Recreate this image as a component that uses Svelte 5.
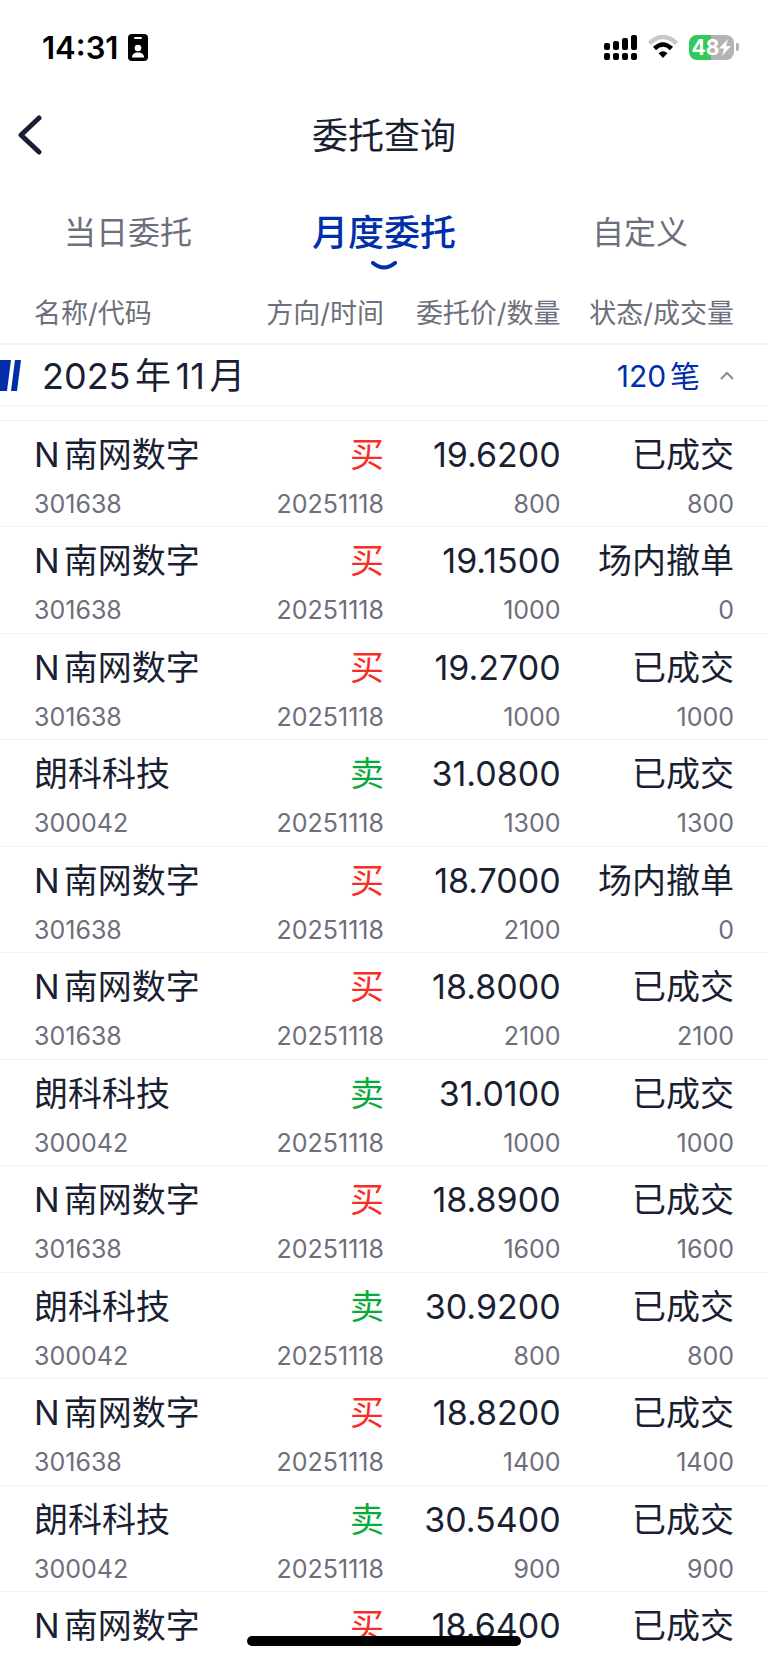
<script lang="ts">
	interface Order {
		name: string;
		side: '买' | '卖';
		price: string;
		status: string;
		code?: string;
		date?: string;
		qty?: string;
		filled?: string;
	}

	const tabs = ['当日委托', '月度委托', '自定义'];
	const columns = ['名称/代码', '方向/时间', '委托价/数量', '状态/成交量'];

	const date = '20251118';
	const nw = { name: 'N南网数字', code: '301638', date };
	const lk = { name: '朗科科技', code: '300042', date };

	const orders: Order[] = [
		{ ...nw, side: '买', price: '19.6200', qty: '800', status: '已成交', filled: '800' },
		{ ...nw, side: '买', price: '19.1500', qty: '1000', status: '场内撤单', filled: '0' },
		{ ...nw, side: '买', price: '19.2700', qty: '1000', status: '已成交', filled: '1000' },
		{ ...lk, side: '卖', price: '31.0800', qty: '1300', status: '已成交', filled: '1300' },
		{ ...nw, side: '买', price: '18.7000', qty: '2100', status: '场内撤单', filled: '0' },
		{ ...nw, side: '买', price: '18.8000', qty: '2100', status: '已成交', filled: '2100' },
		{ ...lk, side: '卖', price: '31.0100', qty: '1000', status: '已成交', filled: '1000' },
		{ ...nw, side: '买', price: '18.8900', qty: '1600', status: '已成交', filled: '1600' },
		{ ...lk, side: '卖', price: '30.9200', qty: '800', status: '已成交', filled: '800' },
		{ ...nw, side: '买', price: '18.8200', qty: '1400', status: '已成交', filled: '1400' },
		{ ...lk, side: '卖', price: '30.5400', qty: '900', status: '已成交', filled: '900' },
		{ name: 'N南网数字', side: '买', price: '18.6400', status: '已成交' }
	];

	let active = $state('月度委托');
	let open = $state(true);
</script>

<div class="screen">
	<div class="status-bar">
		<div class="clock">
			<span>14:31</span>
			<svg width="20" height="27" viewBox="0 0 20 27" aria-hidden="true">
				<rect width="20" height="27" rx="4" />
				<rect x="6" y="3" width="8" height="2" rx="1" fill="#fff" />
				<circle cx="10" cy="14" r="3.300" fill="#fff" />
				<path d="M4 23.500c0-3.500 2.500-5 6-5s6 1.500 6 5z" fill="#fff" />
			</svg>
		</div>
		<div class="indicators">
			<svg width="33" height="25" viewBox="0 0 33 25" aria-hidden="true">
				<rect x="0" y="8" width="6" height="7" rx="2" />
				<rect x="9" y="6" width="6" height="9" rx="2" />
				<rect x="18" y="3" width="6" height="12" rx="2" />
				<rect x="27" y="0" width="6" height="15" rx="2" />
				<rect x="0" y="18" width="6" height="7" rx="2" />
				<rect x="9" y="18" width="6" height="7" rx="2" />
				<rect x="18" y="18" width="6" height="7" rx="2" />
				<rect x="27" y="18" width="6" height="7" rx="2" />
			</svg>
			<svg width="32" height="24" viewBox="0 0 32 24" aria-hidden="true">
				<path d="M2.500 8.500Q16-4.500 29.500 8.500" fill="none" stroke="#c8c8c8" stroke-width="4.500" />
				<path d="M7.500 13.500Q16 5.500 24.500 13.500" fill="none" stroke="#000" stroke-width="4.500" />
				<path d="M11.500 18.200Q16 14.500 20.500 18.200L16 23z" />
			</svg>
			<div class="battery">
				<div class="cell">
					<span>48</span>
					<svg width="12" height="17" viewBox="0 0 12 17" aria-hidden="true">
						<path d="M9 0L0 9.500h5L3 17l9-10H7z" fill="#fff" />
					</svg>
				</div>
				<svg width="3" height="8" viewBox="0 0 3 8" aria-hidden="true">
					<path d="M0 0a4 4 0 0 1 0 8z" fill="#b3b3b3" />
				</svg>
			</div>
		</div>
	</div>

	<header class="title-bar">
		<button type="button" class="back" aria-label="返回">
			<svg width="24" height="40" viewBox="0 0 24 40" aria-hidden="true">
				<path
					d="M21 3L3 20L21 37"
					fill="none"
					stroke="#1b1f33"
					stroke-width="5"
					stroke-linecap="round"
					stroke-linejoin="round"
				/>
			</svg>
		</button>
		<h1>委托查询</h1>
	</header>

	<nav class="tabs">
		{#each tabs as tab (tab)}
			<button type="button" class:active={tab === active} onclick={() => (active = tab)}>
				<span>{tab}</span>
				{#if tab === active}
					<svg width="26" height="9" viewBox="0 0 26 9" aria-hidden="true">
						<path
							d="M2 2Q13 11 24 2"
							fill="none"
							stroke="#002fa9"
							stroke-width="4"
							stroke-linecap="round"
						/>
					</svg>
				{/if}
			</button>
		{/each}
	</nav>

	<table>
		<colgroup>
			<col class="c-name" />
			<col class="c-side" />
			<col class="c-price" />
			<col class="c-status" />
		</colgroup>
		<thead>
			<tr>
				{#each columns as column (column)}
					<th scope="col">{column}</th>
				{/each}
			</tr>
		</thead>
		<tbody>
			<tr class="month">
				<th scope="rowgroup" colspan="4">
					<button type="button" aria-expanded={open} onclick={() => (open = !open)}>
						<svg class="mark" width="21" height="31" viewBox="0 0 21 31" aria-hidden="true">
							<path d="M0 0h11L7 31H0zM15 0h6l-4 31h-6z" fill="#002fa9" />
						</svg>
						<span class="label">2025年11月</span>
						<span class="count">120笔</span>
						<svg class="caret" class:closed={!open} width="14" height="9" viewBox="0 0 14 9" aria-hidden="true">
							<path d="M1 8L7 2L13 8" fill="none" stroke="#8c8c8c" stroke-width="2" />
						</svg>
					</button>
				</th>
			</tr>
			<tr class="gap"><td colspan="4"></td></tr>
		</tbody>
		{#if open}
			<tbody class="orders">
				{#each orders as order, i (i)}
					<tr>
						<td>
							<p class="main">{order.name}</p>
							{#if order.code}<p class="sub">{order.code}</p>{/if}
						</td>
						<td>
							<p class="main" class:buy={order.side === '买'} class:sell={order.side === '卖'}>
								{order.side}
							</p>
							{#if order.date}<p class="sub">{order.date}</p>{/if}
						</td>
						<td>
							<p class="main">{order.price}</p>
							{#if order.qty}<p class="sub">{order.qty}</p>{/if}
						</td>
						<td>
							<p class="main">{order.status}</p>
							{#if order.filled}<p class="sub">{order.filled}</p>{/if}
						</td>
					</tr>
				{/each}
			</tbody>
		{/if}
	</table>

	<div class="home-indicator"></div>
</div>

<style>
	:global(body) {
		background: #fff;
	}

	.screen {
		display: flex;
		flex-direction: column;
		height: 100vh;
		overflow: hidden;
		background: #fff;
		color: #1b1f33;
		font-family: Inter, 'Noto Sans CJK SC', sans-serif;
		text-autospace: normal;
	}

	button {
		padding: 0;
		border: 0;
		background: none;
		color: inherit;
		font: inherit;
		cursor: pointer;
	}

	svg {
		display: block;
		flex: none;
	}

	.status-bar {
		display: flex;
		flex: none;
		align-items: center;
		justify-content: space-between;
		height: 94px;
		padding: 0 29px 0 42px;
		color: #000;
	}

	.clock {
		display: flex;
		align-items: center;
		gap: 10px;
		font-size: 31px;
		font-weight: 600;
	}

	.indicators {
		display: flex;
		align-items: center;
		gap: 10px;
	}

	.battery {
		display: flex;
		align-items: center;
		gap: 2px;
	}

	.cell {
		display: flex;
		align-items: center;
		justify-content: center;
		width: 45px;
		height: 25px;
		border-radius: 8px;
		background: linear-gradient(90deg, #34c759 49%, #b3b3b3 49%);
		color: #fff;
		font-size: 21px;
		font-weight: 700;
	}

	.title-bar {
		display: grid;
		flex: none;
		grid-template-columns: 1fr auto 1fr;
		align-items: center;
		height: 82px;
		padding: 0 18px;
	}

	.back {
		justify-self: start;
	}

	h1 {
		margin: 0;
		padding-bottom: 4px;
		font-size: 36px;
		font-weight: 400;
	}

	.tabs {
		display: grid;
		flex: none;
		grid-template-columns: repeat(3, 1fr);
		height: 109px;
	}

	.tabs button {
		display: flex;
		flex-direction: column;
		align-items: center;
		gap: 2px;
		padding-top: 31px;
		color: #6d6f7c;
		font-size: 32px;
		line-height: 52px;
	}

	.tabs button.active {
		color: #002fa9;
		font-size: 36px;
		font-weight: 500;
	}

	table {
		width: 100%;
		border-collapse: collapse;
		table-layout: fixed;
	}

	.c-name {
		width: 30%;
	}

	.c-side {
		width: 20%;
	}

	.c-price {
		width: 23%;
	}

	.c-status {
		width: 27%;
	}

	th,
	td {
		padding: 0;
		font-weight: 400;
		text-align: right;
		vertical-align: top;
		white-space: nowrap;
	}

	th:first-child,
	td:first-child {
		padding-left: 34px;
		text-align: left;
	}

	th:last-child,
	td:last-child {
		padding-right: 34px;
	}

	thead th {
		height: 58px;
		border-bottom: 2px solid #f1f1f2;
		color: #6d6f7c;
		font-size: 27px;
		line-height: 58px;
	}

	.month th:first-child {
		padding: 0;
		border-bottom: 1px solid #f1f1f2;
	}

	.month button {
		display: flex;
		align-items: center;
		width: 100%;
		height: 60px;
		padding-right: 34px;
	}

	.label {
		margin-left: 21px;
		padding-bottom: 4px;
		font-size: 36px;
	}

	.count {
		margin-left: auto;
		padding-bottom: 2px;
		color: #002fa9;
		font-size: 30px;
	}

	.caret {
		margin-left: 20px;
	}

	.caret.closed {
		transform: rotate(180deg);
	}

	.gap td {
		height: 14px;
		border-bottom: 1px solid #f1f1f2;
	}

	.orders td {
		height: 105px;
		border-bottom: 1px solid #f1f1f2;
	}

	.orders tr:nth-child(even) td {
		height: 106px;
	}

	p {
		margin: 0;
	}

	.main {
		padding-top: 12px;
		font-size: 34px;
		line-height: 44px;
	}

	.sub {
		padding-top: 12px;
		color: #6d6f7c;
		font-size: 25px;
		line-height: 30px;
	}

	.buy {
		color: #fb2b25;
	}

	.sell {
		color: #09aa3c;
	}

	.home-indicator {
		position: fixed;
		bottom: 17px;
		left: 50%;
		width: 274px;
		height: 10px;
		margin-left: -137px;
		border-radius: 5px;
		background: #000;
	}
</style>
